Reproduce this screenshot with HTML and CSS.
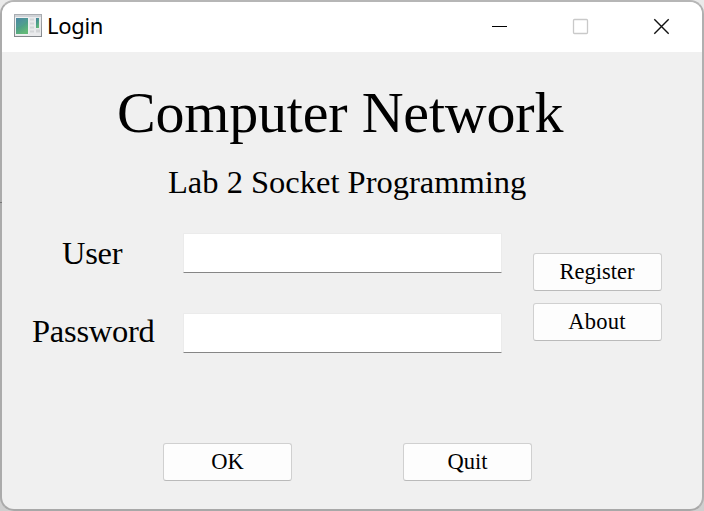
FILE: index.html
```html
<!DOCTYPE html>
<html lang="en">
<head>
<meta charset="utf-8">
<title>Login</title>
<link rel="stylesheet" href="styles.css">
</head>
<body>
<main class="window">
  <header class="titlebar">
    <svg class="app-icon" width="28" height="24" viewBox="0 0 28 24">
      <defs>
        <linearGradient id="screen" x1="0" y1="0" x2="0.5" y2="1">
          <stop offset="0" stop-color="#4580a0"/>
          <stop offset="0.5" stop-color="#4b9a8c"/>
          <stop offset="1" stop-color="#62b878"/>
        </linearGradient>
        <linearGradient id="frame" x1="0" y1="0" x2="0" y2="1">
          <stop offset="0" stop-color="#a9adb2"/>
          <stop offset="1" stop-color="#83878b"/>
        </linearGradient>
      </defs>
      <rect x="0.5" y="0.5" width="27" height="22" fill="#e9eaec" stroke="url(#frame)"/>
      <path d="M1 2h26" stroke="#cfd2d6" stroke-width="2"/>
      <rect x="1.5" y="3.5" width="13" height="17" fill="#f8f8f8"/>
      <rect x="2" y="4" width="12" height="16" fill="url(#screen)"/>
      <path d="M2 14Q9 12 14 6V4H2Z" fill="#6ba6b0" opacity="0.2"/>
      <path d="M16 5.5h4M16 9.5h4M16 13.5h4M16 17.5h4" stroke="#d3d5d8" stroke-width="2"/>
      <rect x="22" y="4" width="3" height="10" fill="url(#screen)"/>
      <path d="M22 17h4" stroke="#d2d4d6" stroke-width="3"/>
    </svg>
    <span class="caption">Login</span>
    <div class="controls">
      <svg class="control" width="81" height="50" viewBox="0 0 81 50"><path d="M33 24.5h15" stroke="#000"/></svg>
      <svg class="control" width="81" height="50" viewBox="0 0 81 50"><rect x="33.5" y="17.5" width="14" height="14" rx="1" fill="none" stroke="#c9c9c9" stroke-width="1.3"/></svg>
      <svg class="control" width="81" height="50" viewBox="0 0 81 50"><path d="M33.3 17.3l14.4 14.4M47.7 17.3L33.3 31.7" stroke="#111" stroke-width="1.4"/></svg>
    </div>
  </header>
  <section class="content">
    <h1 class="title">Computer Network</h1>
    <h2 class="subtitle">Lab 2 Socket Programming</h2>
    <form class="login">
      <div class="fields">
        <label class="label label-user" for="user">User</label>
        <input class="field" id="user" type="text">
        <label class="label label-password" for="password">Password</label>
        <input class="field" id="password" type="password">
      </div>
      <div class="side">
        <button class="button" type="button">Register</button>
        <button class="button button-about" type="button">About</button>
      </div>
    </form>
    <footer class="actions">
      <button class="button" type="button">OK</button>
      <button class="button" type="button">Quit</button>
    </footer>
  </section>
</main>
</body>
</html>
```
FILE: styles.css
```css
* {
  box-sizing: border-box;
}

body {
  margin: 0;
  background: linear-gradient(#eaeaea, #cfcfcf);
  font-family: "Liberation Serif", serif;
  color: #000;
}

.window {
  width: 704px;
  height: 511px;
  overflow: hidden;
  border: 2px solid;
  border-color: #b6b6b6 #b0b0b0 #a8a8a8 #ababab;
  border-radius: 14px;
  background: #f0f0f0;
}

/* Small notch on the window's left frame */
.window::before {
  content: "";
  position: absolute;
  top: 202px;
  left: 0;
  width: 2px;
  height: 1px;
  background: #777;
}

.titlebar {
  display: flex;
  height: 50px;
  padding-left: 12px;
  background: #fff;
}

.app-icon {
  margin-top: 12px;
}

.caption {
  margin-left: 5px;
  font: 22px/47px "Noto Sans", sans-serif;
  letter-spacing: -0.3px;
}

.controls {
  display: flex;
  margin-left: auto;
}

.content {
  padding-top: 30px;
}

.title,
.subtitle {
  margin: 0;
  font-weight: 400;
  white-space: nowrap;
}

.title {
  margin-left: 115px;
  font-size: 58px;
  line-height: 62px;
  letter-spacing: -0.2px;
}

.subtitle {
  margin: 18px 0 0 166px;
  font-size: 32.5px;
  line-height: 40px;
}

.login {
  display: flex;
  margin-top: 31px;
}

.fields {
  display: grid;
  grid-template-columns: 123px 319px;
  grid-template-rows: 40px 40px;
  gap: 40px 28px;
  margin-left: 30px;
}

.label {
  font-size: 32.5px;
  line-height: 40px;
  letter-spacing: -0.25px;
  white-space: nowrap;
}

.label-user {
  padding-left: 30px;
}

.label-password {
  line-height: 36px;
}

.field {
  width: 319px;
  height: 40px;
  padding: 0 8px;
  border: 1px solid #ebebeb;
  border-bottom-color: #868686;
  border-radius: 1px;
  outline: 0;
  background: #fff;
  font: 24px "Liberation Serif", serif;
}

.side {
  display: flex;
  flex-direction: column;
  gap: 12px;
  margin: 20px 0 0 31px;
}

.button {
  width: 129px;
  height: 38px;
  padding: 0;
  border: 1px solid #d0d0d0;
  border-bottom-color: #bababa;
  border-radius: 3px;
  background: #fdfdfd;
  color: #000;
  font: 22.5px/36px "Liberation Serif", serif;
}

.button-about {
  letter-spacing: 0.3px;
}

.side .button {
  padding-right: 1px;
}

.actions {
  display: flex;
  gap: 111px;
  margin: 90px 0 0 161px;
}
```
